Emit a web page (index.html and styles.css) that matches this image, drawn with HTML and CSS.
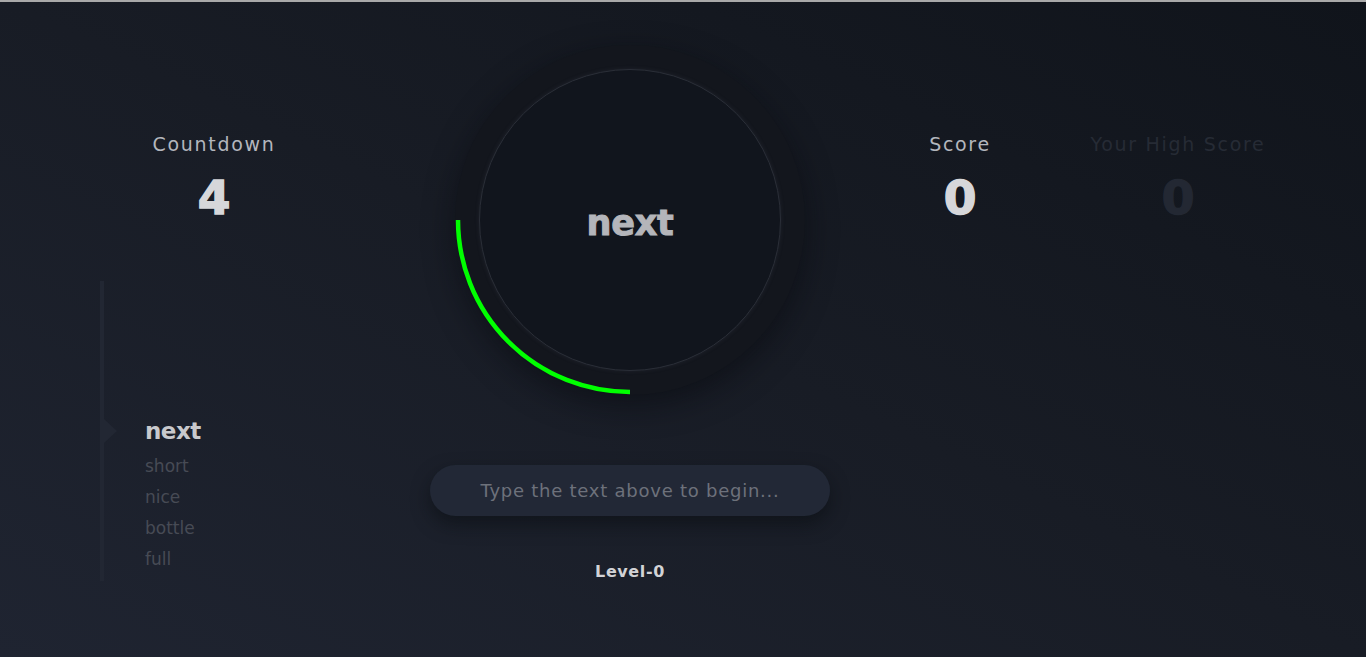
FILE: index.html
```html
<!DOCTYPE html>
<html lang="en">
<head>
<meta charset="utf-8">
<title>Typing Game</title>
<link rel="stylesheet" href="styles.css">
</head>
<body>
<div class="topline"></div>
<main class="app">
  <section class="left">
    <div class="stat">
      <div class="stat-label">Countdown</div>
      <div class="stat-value">4</div>
    </div>
    <ul class="words">
      <li class="word current">next</li>
      <li class="word">short</li>
      <li class="word">nice</li>
      <li class="word">bottle</li>
      <li class="word">full</li>
    </ul>
  </section>

  <section class="center">
    <div class="ring">
      <svg class="arc" width="350" height="350" viewBox="0 0 350 350">
        <path d="M 3 175 A 172 172 0 0 0 175 347" fill="none" stroke="#00ff00" stroke-width="4.5"/>
      </svg>
      <div class="disc">
        <span class="disc-word">next</span>
      </div>
    </div>
    <div class="input">Type the text above to begin...</div>
    <div class="level">Level-0</div>
  </section>

  <section class="right">
    <div class="stat score">
      <div class="stat-label">Score</div>
      <div class="stat-value">0</div>
    </div>
    <div class="stat high">
      <div class="stat-label">Your High Score</div>
      <div class="stat-value">0</div>
    </div>
  </section>
</main>
</body>
</html>
```

FILE: styles.css
```css
* { box-sizing: border-box; }
html, body {
  margin: 0;
  padding: 0;
  height: 657px;
  overflow: hidden;
}
body {
  background: linear-gradient(to top right, #1f2431 0%, #181c25 50%, #10141b 100%);
  font-family: "DejaVu Sans", "Open Sans", sans-serif;
  color: #c9cace;
}
.topline {
  height: 2px;
  background: #a9a9a9;
}
.app {
  display: flex;
  height: 655px;
}

/* left column */
.left {
  width: 328px;
  padding-left: 100px;
  display: flex;
  flex-direction: column;
}
.stat {
  display: flex;
  flex-direction: column;
  align-items: center;
}
.left .stat {
  margin-top: 130px;
}
.stat-label {
  font-size: 19px;
  letter-spacing: 1.7px;
  color: #b3b6bd;
  line-height: 24px;
}
.stat-value {
  margin-top: 18px;
  font-weight: 700;
  font-size: 47px;
  line-height: 48px;
  color: #d6d7da;
  -webkit-text-stroke: 1.5px currentColor;
}
.words {
  list-style: none;
  margin: 59px 0 0 0;
  padding: 135px 0 0 41px;
  height: 300px;
  border-left: 4px solid #222733;
  position: relative;
}
.words::before {
  content: "";
  position: absolute;
  left: 0;
  top: 138px;
  border-style: solid;
  border-width: 12px 0 12px 13px;
  border-color: transparent transparent transparent #222733;
}
.word {
  font-size: 17px;
  line-height: 31px;
  color: #474b55;
}
.word.current {
  font-size: 23px;
  font-weight: 600;
  line-height: 30px;
  margin-bottom: 5px;
  color: #c8c9cd;
  letter-spacing: -0.5px;
}

/* center column */
.center {
  width: 400px;
  margin-left: 102px;
  display: flex;
  flex-direction: column;
  align-items: center;
}
.ring {
  margin-top: 43px;
  width: 350px;
  height: 350px;
  border-radius: 50%;
  background: #13161d;
  box-shadow: 0 10px 30px rgba(8, 10, 14, 0.55);
  display: flex;
  align-items: center;
  justify-content: center;
  position: relative;
}
.arc {
  position: absolute;
  left: 0;
  top: 0;
}
.disc {
  width: 302px;
  height: 302px;
  border-radius: 50%;
  background: #11151d;
  border: 1px solid #2a2e37;
  box-shadow: 0 0 4px rgba(70, 75, 90, 0.25);
  display: flex;
  align-items: center;
  justify-content: center;
}
.disc-word {
  font-weight: 700;
  font-size: 35px;
  color: #b4b5ba;
  letter-spacing: -0.3px;
  margin-top: 6px;
  -webkit-text-stroke: 1px currentColor;
}
.input {
  margin-top: 70px;
  width: 400px;
  height: 51px;
  border-radius: 26px;
  background: #222836;
  box-shadow: 0 8px 18px rgba(10, 12, 16, 0.55);
  display: flex;
  align-items: center;
  justify-content: center;
  font-size: 18px;
  color: #6d717b;
  letter-spacing: 0.75px;
}
.level {
  margin-top: 46px;
  font-size: 16px;
  font-weight: 700;
  letter-spacing: 0.6px;
  color: #d2d3d6;
}

/* right column */
.right {
  display: flex;
  margin-left: 40px;
}
.right .stat {
  margin-top: 130px;
}
.score {
  width: 180px;
}
.high {
  width: 218px;
  margin-left: 19px;
}
.high .stat-label {
  color: #262b35;
}
.high .stat-value {
  color: #232833;
}
```
